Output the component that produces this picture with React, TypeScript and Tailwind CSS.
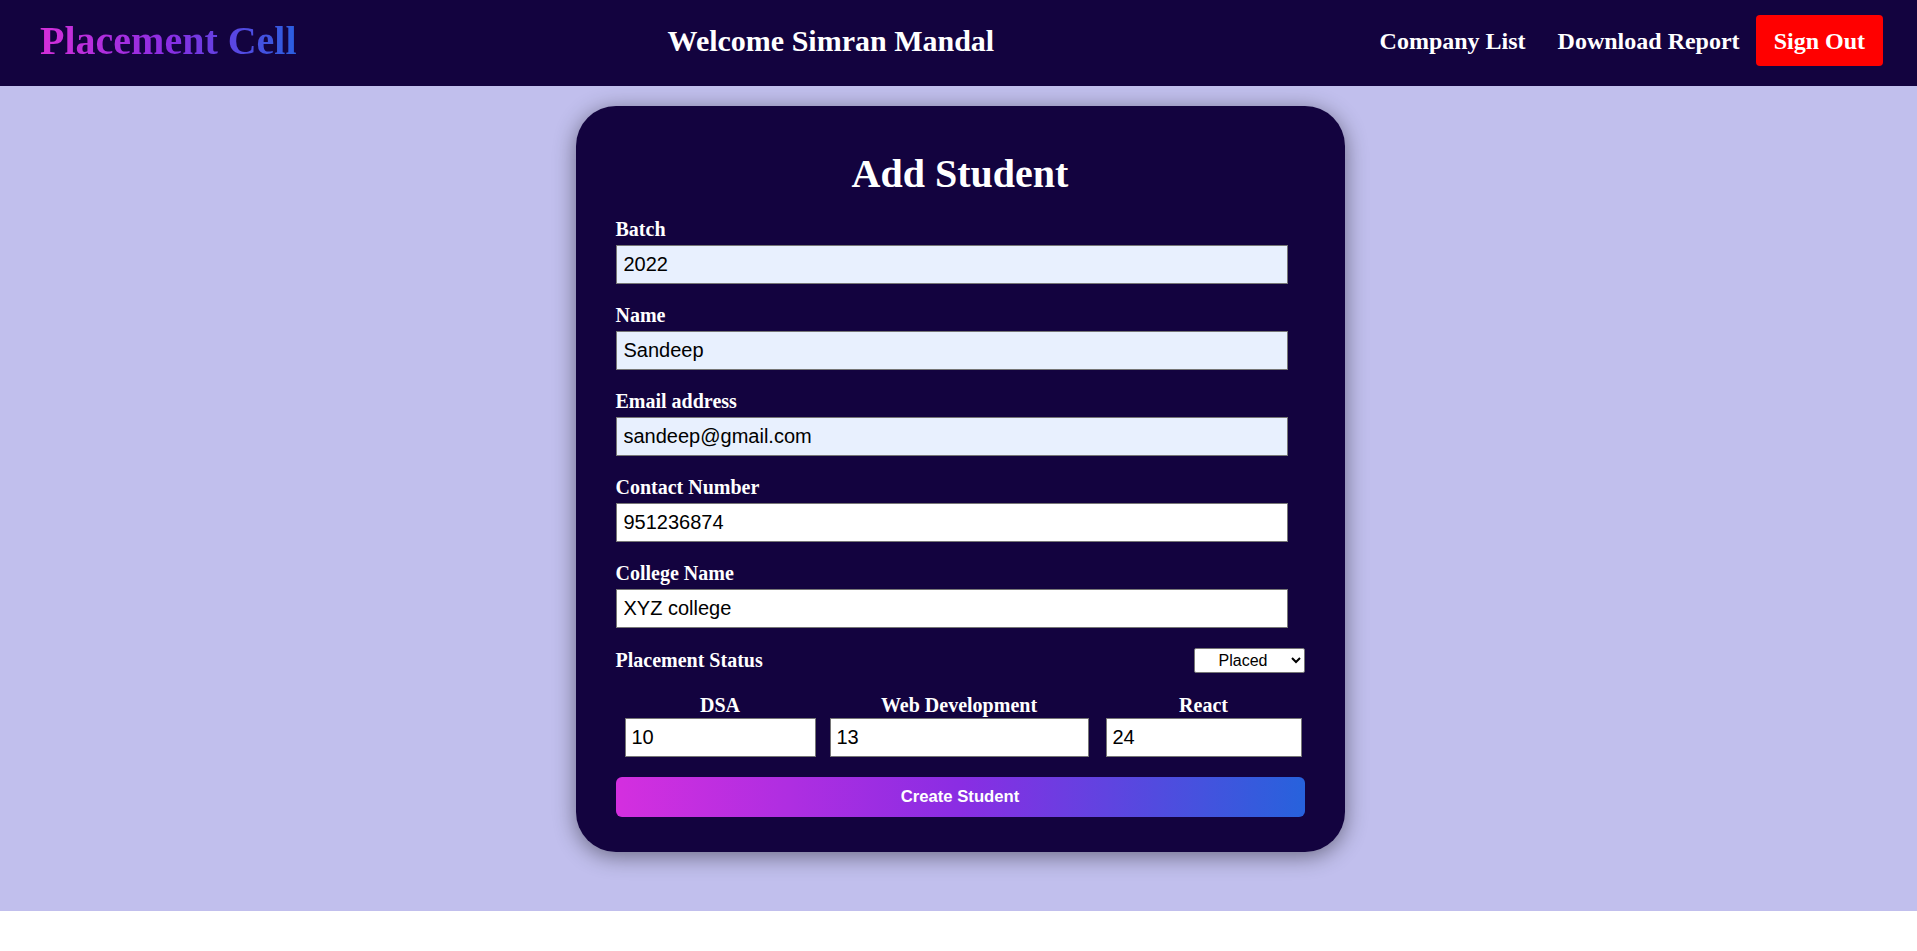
import React from 'react';

const fields = [
	{ label: 'Batch', value: '2022', filled: true },
	{ label: 'Name', value: 'Sandeep', filled: true },
	{ label: 'Email address', value: 'sandeep@gmail.com', filled: true },
	{ label: 'Contact Number', value: '951236874', filled: false },
	{ label: 'College Name', value: 'XYZ college', filled: false },
];

const scores = [
	{ label: 'DSA', value: '10', width: 'w-[191px]', gap: 'ml-0' },
	{ label: 'Web Development', value: '13', width: 'w-[259px]', gap: 'ml-[14px]' },
	{ label: 'React', value: '24', width: 'w-[196px]', gap: 'ml-[17px]' },
];

const App: React.FC = () => {
	return (
		<div className="min-h-screen bg-white font-['Liberation_Serif','Times_New_Roman',serif]">
			<header className="h-[86px] bg-[#13033f] flex items-center pl-[40px] pr-[34px]">
				<h1 className="mb-[5px] text-[40px] leading-[40px] font-bold bg-[linear-gradient(to_right,#d42fd9,#8a2de3,#2a5fe0)] bg-clip-text text-transparent">
					Placement Cell
				</h1>
				<h2 className="ml-[371px] mb-[6px] text-[30px] font-bold text-white">Welcome Simran Mandal</h2>
				<nav className="ml-auto mb-[5px] flex items-center">
					<a href="#" className="text-[24px] font-bold text-white">
						Company List
					</a>
					<a href="#" className="ml-[32px] text-[24px] font-bold text-white">
						Download Report
					</a>
					<button className="ml-[16px] h-[51px] px-[18px] bg-[#ff0000] rounded-[4px] text-white text-[24px] font-bold">
						Sign Out
					</button>
				</nav>
			</header>

			<main className="bg-[#c1bfed] pt-[20px] pb-[59px] pl-[3px]">
				<div className="w-[769px] mx-auto rounded-[40px] bg-[#13033f] shadow-[0_4px_22px_rgba(0,0,0,0.45)] pt-[45px] pb-[35px] px-[40px]">
					<h2 className="text-center text-[40px] leading-[45px] font-bold text-white mb-[22px]">Add Student</h2>

					{fields.map((f) => (
						<div key={f.label} className="mb-[20px]">
							<label className="block text-[20px] leading-[23px] font-bold text-white mb-[4px]">{f.label}</label>
							<input
								defaultValue={f.value}
								className={`w-[672px] h-[39px] border border-[#767676] px-[7px] text-[20px] text-black font-['Liberation_Sans',Arial,sans-serif] ${
									f.filled ? 'bg-[#e8f0fe]' : 'bg-white'
								}`}
							/>
						</div>
					))}

					<div className="flex items-center justify-between mb-[21px]">
						<label className="text-[20px] leading-[23px] font-bold text-white">Placement Status</label>
						<select
							defaultValue="Placed"
							className="w-[111px] h-[25px] bg-white border border-[#767676] rounded-[2px] text-center text-[16px] text-black font-['Liberation_Sans',Arial,sans-serif]"
						>
							<option>Placed</option>
							<option>Not Placed</option>
						</select>
					</div>

					<div className="flex pl-[9px]">
						{scores.map((s) => (
							<div key={s.label} className={`flex flex-col items-center ${s.width} ${s.gap}`}>
								<label className="text-[20px] leading-[23px] font-bold text-white mb-[1px]">{s.label}</label>
								<input
									defaultValue={s.value}
									className="w-full h-[39px] bg-white border border-[#767676] px-[6px] text-[20px] text-black font-['Liberation_Sans',Arial,sans-serif]"
								/>
							</div>
						))}
					</div>

					<button className="mt-[20px] w-full h-[40px] rounded-[6px] bg-[linear-gradient(to_right,#d42fdf,#8a2de3,#2762dc)] text-white font-bold text-[16.7px] font-['Liberation_Sans',Arial,sans-serif]">
						Create Student
					</button>
				</div>
			</main>
		</div>
	);
};

export default App;
